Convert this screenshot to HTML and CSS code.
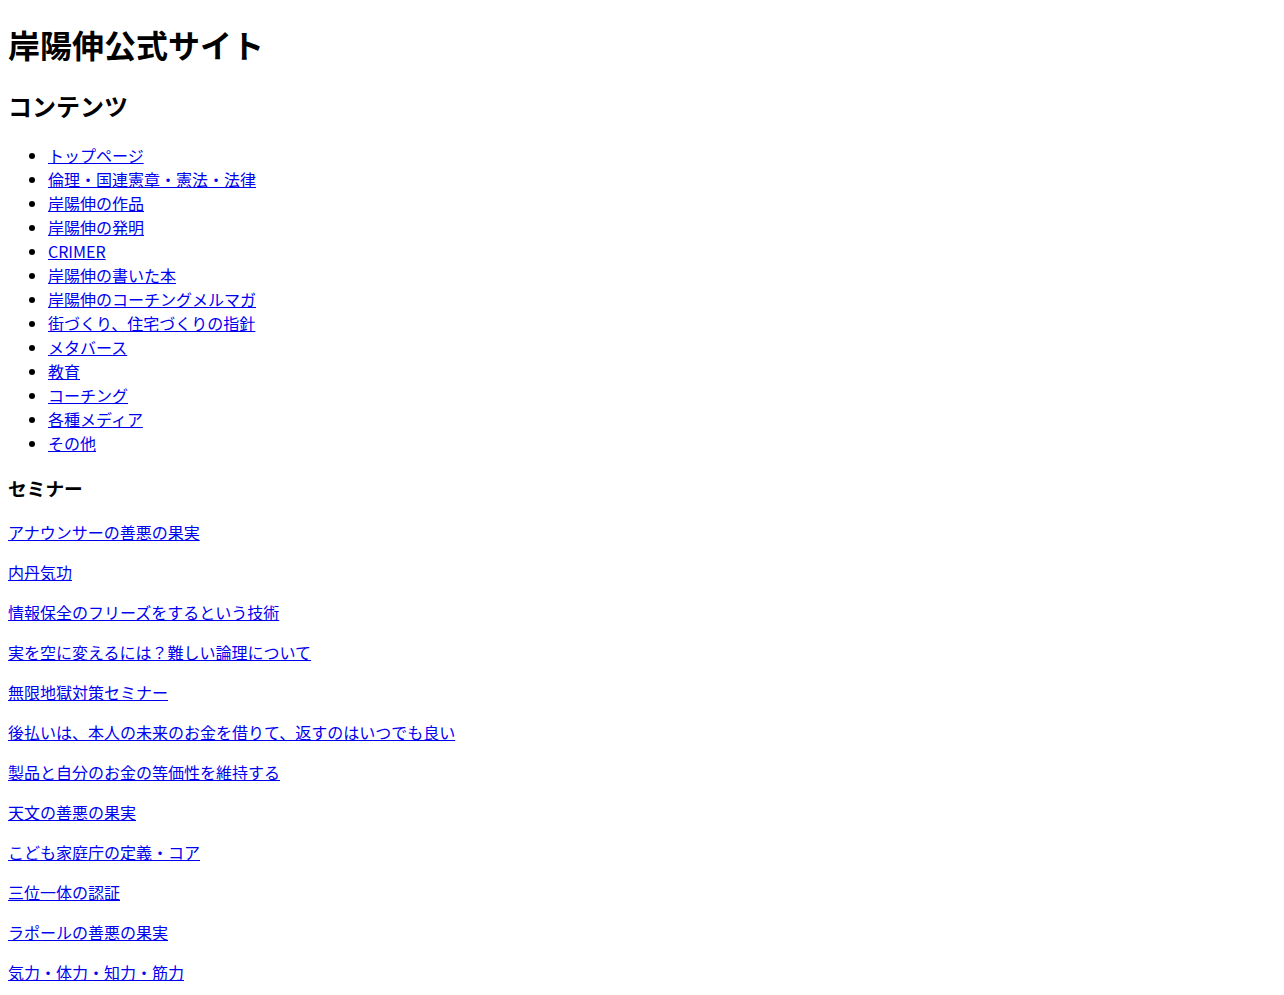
FILE: index.html
```html
<!DOCTYPE html>
<html lang="ja">
<head>
    <meta charset="utf-8"/>
    <meta name="viewport" content="width=device-width, initial-scale=1"/>
    <title>岸陽伸公式サイト</title>
    <link rel="stylesheet" href="styles.css">
</head>
<body>
    <h1>岸陽伸公式サイト</h1>
    <h2>コンテンツ</h2>
    <ul>
        <li><a href="#">トップページ</a></li>
        <li><a href="#">倫理・国連憲章・憲法・法律</a></li>
        <li><a href="#">岸陽伸の作品</a></li>
        <li><a href="#">岸陽伸の発明</a></li>
        <li><a href="#">CRIMER</a></li>
        <li><a href="#">岸陽伸の書いた本</a></li>
        <li><a href="#">岸陽伸のコーチングメルマガ</a></li>
        <li><a href="#">街づくり、住宅づくりの指針</a></li>
        <li><a href="#">メタバース</a></li>
        <li><a href="#">教育</a></li>
        <li><a href="#">コーチング</a></li>
        <li><a href="#">各種メディア</a></li>
        <li><a href="#">その他</a></li>
    </ul>
    <h3>セミナー</h3>
    <p><a href="#">アナウンサーの善悪の果実</a></p>
    <p><a href="#">内丹気功</a></p>
    <p><a href="#">情報保全のフリーズをするという技術</a></p>
    <p><a href="#">実を空に変えるには？難しい論理について</a></p>
    <p><a href="#">無限地獄対策セミナー</a></p>
    <p><a href="#">後払いは、本人の未来のお金を借りて、返すのはいつでも良い</a></p>
    <p><a href="#">製品と自分のお金の等価性を維持する</a></p>
    <p><a href="#">天文の善悪の果実</a></p>
    <p><a href="#">こども家庭庁の定義・コア</a></p>
    <p><a href="#">三位一体の認証</a></p>
    <p><a href="#">ラポールの善悪の果実</a></p>
    <p><a href="#">気力・体力・知力・筋力</a></p>
</body>
</html>
```

FILE: styles.css
```css
body {
    font-family: "Noto Sans CJK JP", "Noto Sans", sans-serif;
    color: #000;
    background: #fff;
}

h1 {
    margin-top: 13px;
}

a {
    color: #0000ee;
}
```
